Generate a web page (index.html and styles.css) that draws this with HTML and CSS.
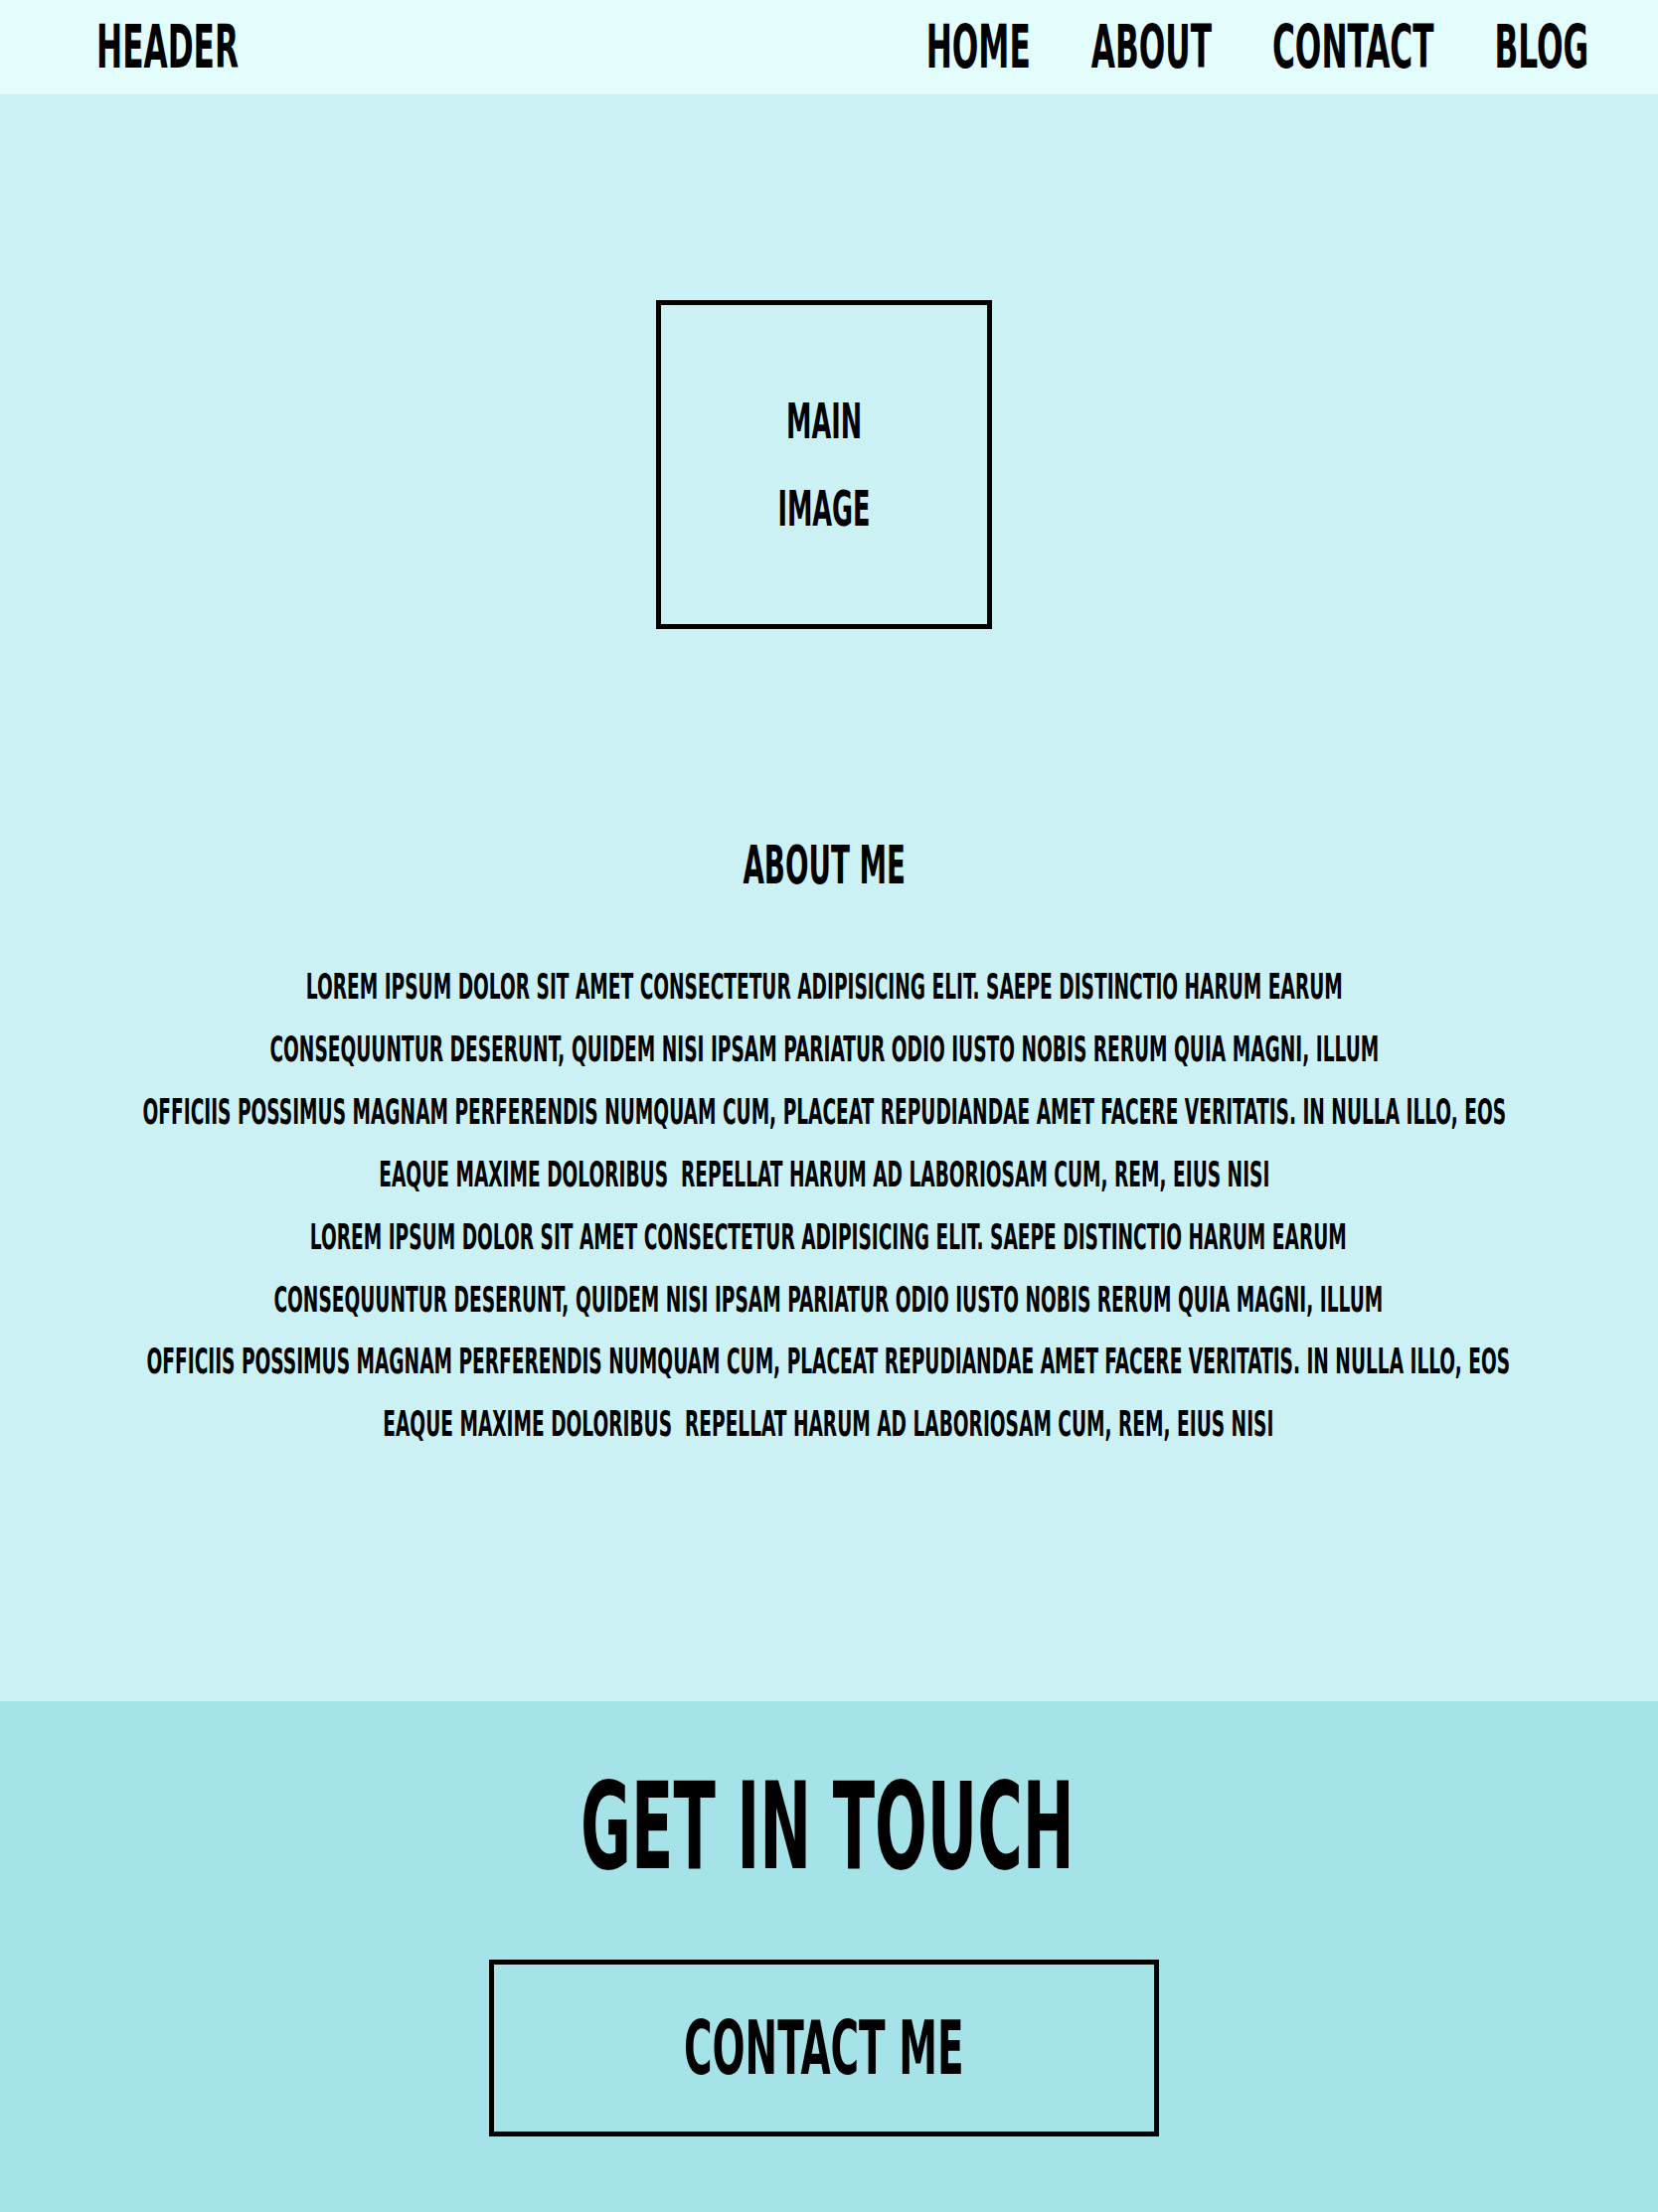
FILE: index.html
```html
<!DOCTYPE html>
<html lang="en">
<head>
<meta charset="utf-8">
<title>Header</title>
<link rel="stylesheet" href="styles.css">
</head>
<body>
<header class="site-header">
  <div class="logo"><span class="sq sq-left">Header</span></div>
  <nav class="nav">
    <ul class="nav-list">
      <li><a href="#">Home</a></li>
      <li><a href="#">About</a></li>
      <li><a href="#">Contact</a></li>
      <li><a href="#">Blog</a></li>
    </ul>
  </nav>
</header>

<main class="about">
  <div class="main-image">
    <span class="sq">Main</span>
    <span class="sq">Image</span>
  </div>
  <h2 class="about-title"><span class="sq">About me</span></h2>
  <div class="about-text">
    <p>Lorem ipsum dolor sit amet consectetur adipisicing elit. Saepe distinctio harum earum<br>consequuntur deserunt, quidem nisi ipsam pariatur odio iusto nobis rerum quia magni, illum<br>officiis possimus magnam perferendis numquam cum, placeat repudiandae amet facere veritatis. In nulla illo, eos<br>eaque maxime doloribus&nbsp; repellat harum ad laboriosam cum, rem, eius nisi</p>
    <p class="shifted">Lorem ipsum dolor sit amet consectetur adipisicing elit. Saepe distinctio harum earum<br>consequuntur deserunt, quidem nisi ipsam pariatur odio iusto nobis rerum quia magni, illum<br>officiis possimus magnam perferendis numquam cum, placeat repudiandae amet facere veritatis. In nulla illo, eos<br>eaque maxime doloribus&nbsp; repellat harum ad laboriosam cum, rem, eius nisi</p>
  </div>
</main>

<footer class="contact">
  <h2 class="contact-title"><span class="sq">Get in touch</span></h2>
  <a class="contact-btn" href="#"><span class="sq">Contact me</span></a>
</footer>
</body>
</html>
```

FILE: styles.css
```css
:root {
  --sx: 0.575;
}

* {
  box-sizing: border-box;
}

body {
  margin: 0;
  font-family: "DejaVu Sans Condensed", "Liberation Sans", sans-serif;
  font-weight: 700;
  color: #000;
  text-transform: uppercase;
}

.sq {
  display: inline-block;
  transform: scaleX(var(--sx));
  transform-origin: center;
  white-space: nowrap;
}

.sq-left {
  transform-origin: left center;
}

/* Header */
.site-header {
  height: 95px;
  background: #e3fdfd;
  display: flex;
  align-items: center;
  justify-content: space-between;
  padding: 0 70px 0 97px;
}

.logo {
  font-size: 60.4px;
  line-height: 1;
}

.nav-list {
  list-style: none;
  margin: 0;
  padding: 0;
  display: flex;
  gap: 106px;
  transform: scaleX(var(--sx));
  transform-origin: right center;
}

.nav-list a {
  color: #000;
  text-decoration: none;
  font-size: 60.4px;
  line-height: 1;
  white-space: nowrap;
}

/* About */
.about {
  background: #cbf1f5;
  padding: 207px 10px 247px 0;
  overflow-x: clip;
}

.main-image {
  width: 338px;
  height: 331px;
  margin: 0 auto;
  border: 5px solid #000;
  display: flex;
  flex-direction: column;
  align-items: center;
  justify-content: center;
  font-size: 49.4px;
  line-height: 88px;
}

.about-title {
  margin: 208px 0 0;
  font-size: 53.5px;
  line-height: 60px;
  font-weight: 700;
  text-align: center;
}

.about-text {
  margin-top: 61px;
  display: flex;
  flex-direction: column;
  align-items: center;
}

.about-text p {
  margin: 0;
  font-size: 35px;
  line-height: 62.9px;
  text-align: center;
  white-space: nowrap;
  transform: scaleX(0.59);
}

.about-text .shifted {
  margin-left: 9px;
}

/* Contact */
.contact {
  background: #a6e3e9;
  padding: 51px 10px 76px 0;
  display: flex;
  flex-direction: column;
  align-items: center;
}

.contact-title {
  margin: 0;
  padding-left: 7px;
  font-size: 122px;
  line-height: 150px;
  font-weight: 700;
}

.contact-title .sq {
  transform: scaleX(0.565);
}

.contact-btn {
  margin-top: 59px;
  width: 674px;
  height: 178px;
  border: 5px solid #000;
  display: flex;
  align-items: center;
  justify-content: center;
  color: #000;
  text-decoration: none;
  font-size: 74px;
  line-height: 1;
}

.contact-btn .sq {
  transform: scaleX(0.585);
}
```
